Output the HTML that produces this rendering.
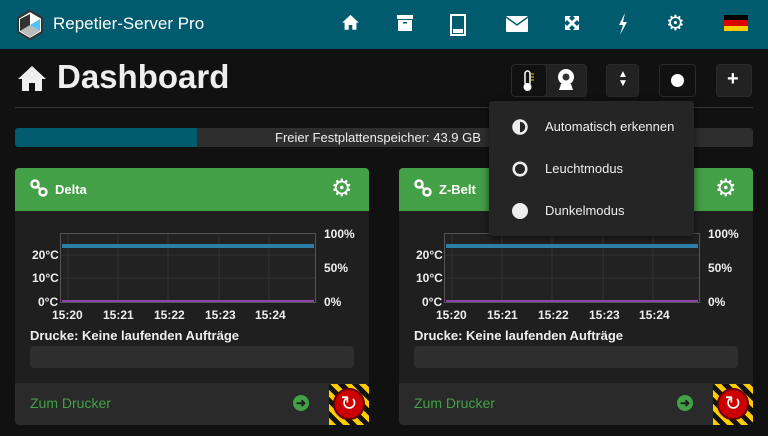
<!DOCTYPE html>
<html><head><meta charset="utf-8"><style>
*{box-sizing:border-box;margin:0;padding:0}
body{width:768px;height:436px;background:#111;font-family:"Liberation Sans",sans-serif;color:#eee;position:relative;overflow:hidden}
.hdr{position:absolute;left:0;top:0;width:768px;height:49px;background:#005b6e}
.abs{position:absolute}
.btn{position:absolute;top:64px;height:33px;border:1px solid #2a2a2a;border-radius:4px;background:#222}
.card{position:absolute;top:168px;width:354px;height:257px;background:#1f1f1f;border-radius:4px;overflow:hidden}
.ch{height:43px;background:#43a047;position:relative}
.lab{position:absolute;font-size:12px;font-weight:bold;color:#eee}
.ft{position:absolute;left:0;top:215px;width:354px;height:42px;background:#2a2a2a}
.menu{position:absolute;left:489px;top:101px;width:205px;height:135px;background:#252525;border-radius:3px;box-shadow:0 2px 8px rgba(0,0,0,.6)}
.mi{position:absolute;left:56px;font-size:13px;color:#eee}
</style></head><body>
<div class="hdr"></div>
<svg class="abs" style="left:16px;top:10px" width="28" height="30" viewBox="0 0 28 30">
<polygon points="14,1 26,8 26,22 14,29 2,22 2,8" fill="#fff" stroke="#333" stroke-width="2"/>
<polygon points="14,15 24,21 14,27 4,21" fill="#bbb"/><polygon points="14,4 14,15 4,21 4,9" fill="#333"/><polygon points="14,15 24,9 24,21" fill="#4fc3f7"/></svg>
<div class="abs" style="left:53px;top:14px;font-size:17px;color:#fff">Repetier-Server Pro</div>
<svg class="abs" style="left:341px;top:13px" width="19" height="18" viewBox="0 0 32 28"><path d="M16 2 L2 15 L6 15 L6 27 L13 27 L13 19 L19 19 L19 27 L26 27 L26 15 L30 15 Z" fill="#fff"/></svg>
<svg class="abs" style="left:396px;top:14px" width="18" height="18"><rect x="1" y="1" width="16" height="4" fill="#fff"/><rect x="2" y="6" width="14" height="11" fill="#fff"/><rect x="7" y="8" width="4" height="1.5" fill="#005b6e"/></svg>
<svg class="abs" style="left:450px;top:14px" width="16" height="22"><rect x="1" y="1" width="14" height="20" fill="none" stroke="#fff" stroke-width="2"/><rect x="3" y="15" width="10" height="4" fill="#fff"/></svg>
<svg class="abs" style="left:505px;top:15px" width="24" height="18"><rect x="1" y="1" width="22" height="16" fill="#fff" rx="1"/><path d="M1 2 L12 10 L23 2" stroke="#005b6e" stroke-width="1.5" fill="none"/></svg>
<svg class="abs" style="left:563px;top:14px" width="18" height="20"><path d="M2 2h6l-2 2 3 3 3-3-2-2h6v6l-2-2-3 3 3 3 2-2v6h-6l2-2-3-3-3 3 2 2H2v-6l2 2 3-3-3-3-2 2z" fill="#fff"/></svg>
<svg class="abs" style="left:617px;top:13px" width="12" height="22"><path d="M8 0 L2 12 L6 12 L3 22 L10 9 L6 9 Z" fill="#fff"/></svg>
<div class="abs" style="left:666px;top:11px;font-size:21px;color:#fff">&#9881;</div>
<div class="abs" style="left:724px;top:15px;width:24px;height:16px"><div style="height:5px;background:#000"></div><div style="height:6px;background:#d00"></div><div style="height:5px;background:#fc0"></div></div>

<svg class="abs" style="left:16px;top:64px" width="32" height="28" viewBox="0 0 32 28"><path d="M16 2 L2 15 L6 15 L6 27 L13 27 L13 19 L19 19 L19 27 L26 27 L26 15 L30 15 Z" fill="#eee"/></svg>
<div class="abs" style="left:57px;top:58px;font-size:33px;font-weight:bold;color:#eee">Dashboard</div>
<div class="abs" style="left:15px;top:107px;width:738px;height:1px;background:#333"></div>

<div class="btn" style="left:511px;width:76px"></div>
<div class="btn" style="left:511px;width:36px;background:#111"></div>
<svg class="abs" style="left:521px;top:69px" width="14" height="24"><rect x="4" y="2" width="5" height="14" rx="2.5" fill="none" stroke="#fff" stroke-width="1.5"/><circle cx="6.5" cy="18" r="4" fill="#fff"/><path d="M10 5h3M10 8h3M10 11h3" stroke="#fc0"/></svg>
<svg class="abs" style="left:557px;top:68px" width="18" height="24"><circle cx="9" cy="9" r="8" fill="#fff"/><circle cx="9" cy="9" r="3.5" fill="#333"/><path d="M4 16 L2 22 H16 L14 16" fill="#fff"/></svg>
<div class="btn" style="left:606px;width:33px"></div>
<div class="abs" style="left:618px;top:70px;font-size:10px;line-height:9px;color:#fff">▲<br>▼</div>
<div class="btn" style="left:659px;width:37px;background:#111"></div>
<div class="abs" style="left:671px;top:74px;width:13px;height:13px;border-radius:50%;background:#fff"></div>
<div class="btn" style="left:716px;width:36px"></div>
<div class="abs" style="left:727px;top:68px;font-size:20px;font-weight:bold;color:#fff">+</div>

<div class="abs" style="left:15px;top:128px;width:738px;height:19px;background:#2e2e2e;border-radius:3px;overflow:hidden"><div style="width:182px;height:19px;background:#005b6e"></div></div>
<div class="abs" style="left:275px;top:130px;font-size:13px;color:#eee">Freier Festplattenspeicher: 43.9 GB</div>

<div class="card" style="left:15px">
<div class="ch"><svg class="abs" style="left:15px;top:11px" width="18" height="18"><circle cx="5" cy="5" r="3.5" fill="none" stroke="#fff" stroke-width="2.5"/><circle cx="13" cy="13" r="3.5" fill="none" stroke="#fff" stroke-width="2.5"/><path d="M7 7L11 11" stroke="#fff" stroke-width="2.5"/></svg><div class="abs" style="left:40px;top:14px;font-size:13px;color:#fff;font-weight:bold">Delta</div><div class="abs" style="left:316px;top:6px;font-size:24px;color:#fff">&#9881;</div></div>
<svg class="abs" style="left:45px;top:65px" width="256" height="70"><rect x="0.5" y="0.5" width="255" height="69" fill="#222" stroke="#555"/><path d="M8 1V69M58 1V69M108 1V69M159 1V69M209 1V69M1 22H255M1 45H255" stroke="#333"/><path d="M2 13 L254 13" stroke="#2e7fa8" stroke-width="4"/><path d="M2 68 L254 68" stroke="#8e44ad" stroke-width="2"/></svg>
<div class="lab" style="left:17px;top:80px">20°C</div><div class="lab" style="left:17px;top:103px">10°C</div><div class="lab" style="left:23px;top:127px">0°C</div>
<div class="lab" style="left:309px;top:59px">100%</div><div class="lab" style="left:309px;top:93px">50%</div><div class="lab" style="left:309px;top:127px">0%</div>
<div class="lab" style="left:37px;top:140px">15:20</div><div class="lab" style="left:88px;top:140px">15:21</div><div class="lab" style="left:139px;top:140px">15:22</div><div class="lab" style="left:190px;top:140px">15:23</div><div class="lab" style="left:240px;top:140px">15:24</div>
<div class="abs" style="left:15px;top:160px;font-size:13px;font-weight:bold;color:#eee">Drucke: Keine laufenden Aufträge</div>
<div class="abs" style="left:15px;top:178px;width:324px;height:22px;background:#2e2e2e;border-radius:4px"></div>
<div class="ft"><div class="abs" style="left:15px;top:12px;font-size:14px;color:#43a047">Zum Drucker</div><div class="abs" style="left:278px;top:12px;width:16px;height:16px;border-radius:50%;background:#43a047;color:#1f1f1f;font-size:12px;line-height:16px;text-align:center;font-weight:bold">➜</div>
<div class="abs" style="left:314px;top:1px;width:40px;height:41px;background:repeating-linear-gradient(45deg,#fc0 0 5px,#111 5px 10px)"><div style="margin:4px;width:32px;height:32px;border-radius:50%;background:#c00;border:2px solid #600;color:#fff;font-size:20px;line-height:28px;text-align:center">↻</div></div></div>
</div>
<div class="card" style="left:399px">
<div class="ch"><svg class="abs" style="left:15px;top:11px" width="18" height="18"><circle cx="5" cy="5" r="3.5" fill="none" stroke="#fff" stroke-width="2.5"/><circle cx="13" cy="13" r="3.5" fill="none" stroke="#fff" stroke-width="2.5"/><path d="M7 7L11 11" stroke="#fff" stroke-width="2.5"/></svg><div class="abs" style="left:40px;top:14px;font-size:13px;color:#fff;font-weight:bold">Z-Belt</div><div class="abs" style="left:316px;top:6px;font-size:24px;color:#fff">&#9881;</div></div>
<svg class="abs" style="left:45px;top:65px" width="256" height="70"><rect x="0.5" y="0.5" width="255" height="69" fill="#222" stroke="#555"/><path d="M8 1V69M58 1V69M108 1V69M159 1V69M209 1V69M1 22H255M1 45H255" stroke="#333"/><path d="M2 13 L254 13" stroke="#2e7fa8" stroke-width="4"/><path d="M2 68 L254 68" stroke="#8e44ad" stroke-width="2"/></svg>
<div class="lab" style="left:17px;top:80px">20°C</div><div class="lab" style="left:17px;top:103px">10°C</div><div class="lab" style="left:23px;top:127px">0°C</div>
<div class="lab" style="left:309px;top:59px">100%</div><div class="lab" style="left:309px;top:93px">50%</div><div class="lab" style="left:309px;top:127px">0%</div>
<div class="lab" style="left:37px;top:140px">15:20</div><div class="lab" style="left:88px;top:140px">15:21</div><div class="lab" style="left:139px;top:140px">15:22</div><div class="lab" style="left:190px;top:140px">15:23</div><div class="lab" style="left:240px;top:140px">15:24</div>
<div class="abs" style="left:15px;top:160px;font-size:13px;font-weight:bold;color:#eee">Drucke: Keine laufenden Aufträge</div>
<div class="abs" style="left:15px;top:178px;width:324px;height:22px;background:#2e2e2e;border-radius:4px"></div>
<div class="ft"><div class="abs" style="left:15px;top:12px;font-size:14px;color:#43a047">Zum Drucker</div><div class="abs" style="left:278px;top:12px;width:16px;height:16px;border-radius:50%;background:#43a047;color:#1f1f1f;font-size:12px;line-height:16px;text-align:center;font-weight:bold">➜</div>
<div class="abs" style="left:314px;top:1px;width:40px;height:41px;background:repeating-linear-gradient(45deg,#fc0 0 5px,#111 5px 10px)"><div style="margin:4px;width:32px;height:32px;border-radius:50%;background:#c00;border:2px solid #600;color:#fff;font-size:20px;line-height:28px;text-align:center">↻</div></div></div>
</div>

<div class="menu">
<svg class="abs" style="left:23px;top:18px" width="16" height="16"><circle cx="8" cy="8" r="6.5" fill="none" stroke="#eee" stroke-width="2.5"/><path d="M8 1.5 A6.5 6.5 0 0 0 8 14.5Z" fill="#eee"/></svg>
<div class="mi" style="top:18px">Automatisch erkennen</div>
<svg class="abs" style="left:23px;top:60px" width="16" height="16"><circle cx="8" cy="8" r="6.3" fill="none" stroke="#eee" stroke-width="2.5"/></svg>
<div class="mi" style="top:60px">Leuchtmodus</div>
<svg class="abs" style="left:23px;top:102px" width="16" height="16"><circle cx="8" cy="8" r="8" fill="#eee"/></svg>
<div class="mi" style="top:102px">Dunkelmodus</div>
</div>
</body></html>
